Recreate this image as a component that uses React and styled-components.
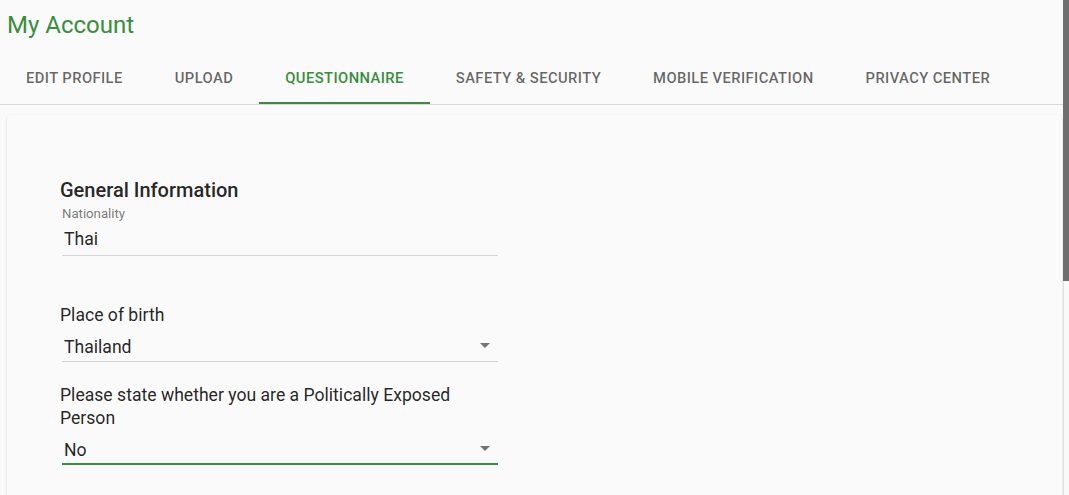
import React from "react";
import styled, { createGlobalStyle } from "styled-components";

const GREEN = "#388e3c";

const Global = createGlobalStyle`
  html, body { margin: 0; padding: 0; background: #fafafa; overflow: hidden; }
  body { font-family: Roboto, "Liberation Sans", Arial, sans-serif; color: rgba(0,0,0,0.87); }
`;

const Shell = styled.div`
  display: flex;
  height: 100vh;
  overflow: hidden;
`;

const Main = styled.main`
  flex: 1;
  min-width: 0;
  display: flex;
  flex-direction: column;
  overflow: hidden;
`;

const ScrollTrack = styled.div`
  width: 6px;
  flex: none;
  display: flex;
  flex-direction: column;
  background: #f9f9f9;
  border-left: 1px solid #e2e2e2;
  box-sizing: border-box;
`;

const ScrollThumb = styled.div`
  height: 281px;
  margin-left: -1px;
  background: #6f6f6f;
`;

const Header = styled.header`
  display: flex;
  flex-direction: column;
  padding-top: 11px;
`;

const Title = styled.h1`
  margin: 0 0 15px 0;
  padding-left: 7px;
  font-size: 24px;
  line-height: 28px;
  font-weight: 400;
  color: ${GREEN};
`;

const TabBar = styled.nav`
  display: flex;
  border-bottom: 1px solid #d9d9d9;
`;

const Tab = styled.div`
  position: relative;
  height: 50px;
  padding: 0 26px 2px;
  box-sizing: border-box;
  display: flex;
  align-items: center;
  font-size: 14.75px;
  font-weight: 500;
  letter-spacing: 0.02857em;
  text-transform: uppercase;
  white-space: nowrap;
  color: ${(p) => (p.$active ? GREEN : "rgba(0,0,0,0.6)")};
  &::after {
    content: "";
    position: absolute;
    left: 0;
    right: 0;
    bottom: 0;
    height: 2px;
    background: ${(p) => (p.$active ? GREEN : "transparent")};
  }
`;

const Card = styled.section`
  margin: 10px 1px 0 7px;
  min-height: 748px;
  flex: none;
  box-sizing: border-box;
  padding: 63px 53px;
  background: #fafafa;
  border-radius: 4px;
  box-shadow: 0 2px 1px -1px rgba(0,0,0,0.2), 0 1px 1px 0 rgba(0,0,0,0.14), 0 1px 3px 0 rgba(0,0,0,0.12);
`;

const Form = styled.div`
  width: 438px;
  display: flex;
  flex-direction: column;
`;

const Heading = styled.h2`
  margin: 0;
  font-size: 20px;
  line-height: 24px;
  font-weight: 500;
  color: rgba(0,0,0,0.87);
`;

const SmallLabel = styled.label`
  margin: 4px 0 0 2px;
  font-size: 13.2px;
  line-height: 16px;
  color: rgba(0,0,0,0.54);
`;

const Label = styled.label`
  margin-top: ${(p) => p.$top}px;
  font-size: 17.6px;
  line-height: ${(p) => p.$lh || 21}px;
  color: rgba(0,0,0,0.87);
`;

const Field = styled.div`
  margin-left: 2px;
  display: flex;
  align-items: center;
  justify-content: space-between;
  padding: ${(p) => p.$pt}px 0 ${(p) => p.$pb}px 2px;
  font-size: 17.6px;
  line-height: 21px;
  color: rgba(0,0,0,0.87);
  border-bottom: ${(p) => (p.$focused ? `2px solid ${GREEN}` : "1px solid #d4d4d4")};
`;

const Arrow = styled.svg`
  width: 24px;
  height: 24px;
  margin: -6px 1px 0 0;
  fill: rgba(0,0,0,0.54);
`;

const DropArrow = () => (
  <Arrow viewBox="0 0 24 24">
    <path d="M7 10l5 5 5-5z" />
  </Arrow>
);

const tabs = [
  "Edit Profile",
  "Upload",
  "Questionnaire",
  "Safety & Security",
  "Mobile Verification",
  "Privacy Center",
];

export default function App() {
  return (
    <Shell>
      <Global />
      <Main>
        <Header>
          <Title>My Account</Title>
          <TabBar>
            {tabs.map((t) => (
              <Tab key={t} $active={t === "Questionnaire"}>
                {t}
              </Tab>
            ))}
          </TabBar>
        </Header>
        <Card>
          <Form>
            <Heading>General Information</Heading>
            <SmallLabel>Nationality</SmallLabel>
            <Field $pt={7} $pb={5}>
              <span>Thai</span>
            </Field>
            <Label $top={49}>Place of birth</Label>
            <Field $pt={11} $pb={3}>
              <span>Thailand</span>
              <DropArrow />
            </Field>
            <Label $top={22} $lh={23}>
              Please state whether you are a Politically Exposed Person
            </Label>
            <Field $pt={10} $pb={2} $focused>
              <span>No</span>
              <DropArrow />
            </Field>
          </Form>
        </Card>
      </Main>
      <ScrollTrack>
        <ScrollThumb />
      </ScrollTrack>
    </Shell>
  );
}
